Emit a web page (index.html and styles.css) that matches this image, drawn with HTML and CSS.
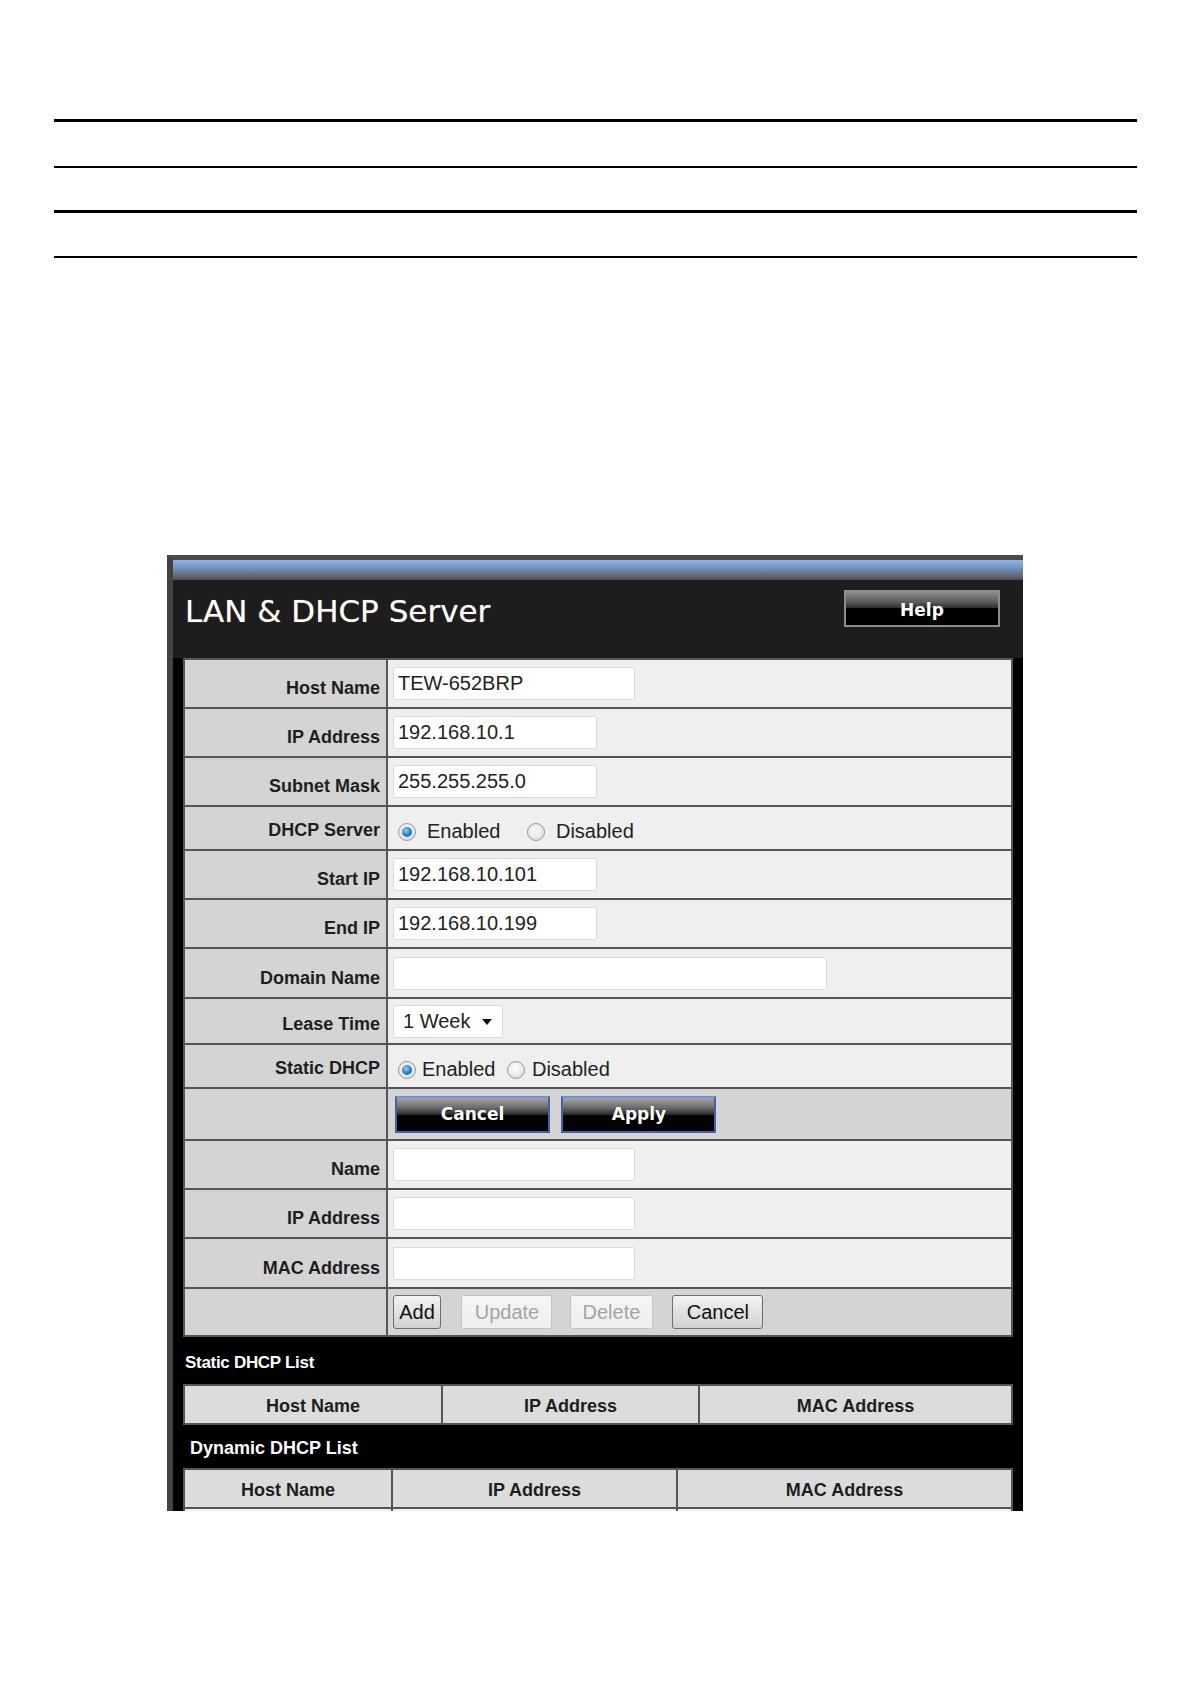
FILE: index.html
```html
<!DOCTYPE html>
<html lang="en">
<head>
    <meta charset="UTF-8">
    <meta name="viewport" content="width=device-width, initial-scale=1.0">
    <title>LAN &amp; DHCP Server</title>
    <link rel="stylesheet" href="styles.css">
</head>
<body>
    <div class="rules">
        <div class="rule thick"></div>
        <div class="rule thin r2"></div>
        <div class="rule thick r3"></div>
        <div class="rule thin r4"></div>
    </div>

    <div class="panel">
        <div class="panel-bar"></div>
        <div class="panel-head">
            <div class="panel-title">LAN &amp; DHCP Server</div>
            <button class="help-btn">Help</button>
        </div>

        <div class="panel-body">
            <table class="form">
                <colgroup>
                    <col class="col-label">
                    <col>
                </colgroup>
                <tr class="h49">
                    <th>Host Name</th>
                    <td><input class="field long" type="text" value="TEW-652BRP"></td>
                </tr>
                <tr class="h49">
                    <th>IP Address</th>
                    <td><input class="field" type="text" value="192.168.10.1"></td>
                </tr>
                <tr class="h49">
                    <th>Subnet Mask</th>
                    <td><input class="field" type="text" value="255.255.255.0"></td>
                </tr>
                <tr class="h44">
                    <th>DHCP Server</th>
                    <td class="radios">
                        <span class="radio on"></span><span class="radio-label">Enabled</span>
                        <span class="radio off wide"></span><span class="radio-label">Disabled</span>
                    </td>
                </tr>
                <tr class="h49">
                    <th>Start IP</th>
                    <td><input class="field" type="text" value="192.168.10.101"></td>
                </tr>
                <tr class="h49">
                    <th>End IP</th>
                    <td><input class="field" type="text" value="192.168.10.199"></td>
                </tr>
                <tr class="h50">
                    <th>Domain Name</th>
                    <td><input class="field domain" type="text" value=""></td>
                </tr>
                <tr class="h46">
                    <th>Lease Time</th>
                    <td>
                        <div class="select">1 Week<span class="caret"></span></div>
                    </td>
                </tr>
                <tr class="h44">
                    <th>Static DHCP</th>
                    <td class="radios tight">
                        <span class="radio on"></span><span class="radio-label">Enabled</span>
                        <span class="radio off"></span><span class="radio-label">Disabled</span>
                    </td>
                </tr>
                <tr class="h52 btn-row">
                    <th></th>
                    <td>
                        <button class="dark-btn">Cancel</button>
                        <button class="dark-btn">Apply</button>
                    </td>
                </tr>
                <tr class="h49">
                    <th>Name</th>
                    <td><input class="field long" type="text" value=""></td>
                </tr>
                <tr class="h49">
                    <th>IP Address</th>
                    <td><input class="field long" type="text" value=""></td>
                </tr>
                <tr class="h50">
                    <th>MAC Address</th>
                    <td><input class="field long" type="text" value=""></td>
                </tr>
                <tr class="h48 btn-row">
                    <th></th>
                    <td>
                        <button class="small-btn add">Add</button>
                        <button class="small-btn update" disabled>Update</button>
                        <button class="small-btn delete" disabled>Delete</button>
                        <button class="small-btn cancel">Cancel</button>
                    </td>
                </tr>
            </table>

            <div class="list-title static">Static DHCP List</div>
            <table class="list static-list">
                <tr>
                    <th>Host Name</th>
                    <th>IP Address</th>
                    <th>MAC Address</th>
                </tr>
            </table>

            <div class="list-title dynamic">Dynamic DHCP List</div>
            <table class="list dynamic-list">
                <tr>
                    <th>Host Name</th>
                    <th>IP Address</th>
                    <th>MAC Address</th>
                </tr>
                <tr class="empty">
                    <td></td>
                    <td></td>
                    <td></td>
                </tr>
            </table>
        </div>
    </div>
</body>
</html>
```

FILE: styles.css
```css
body {
    margin: 0;
    background: #fff;
    font-family: "Liberation Sans", Arial, sans-serif;
}

/* horizontal rules at the top of the page */
.rules {
    padding-top: 119px;
    margin-left: 54px;
    width: 1083px;
}

.rule {
    border-top: 3px solid #000;
}

.rule.thin {
    border-top-width: 2px;
}

.r2 { margin-top: 44px; }
.r3 { margin-top: 42px; }
.r4 { margin-top: 43px; }

/* screenshot panel */
.panel {
    margin: 297px 0 0 167px;
    width: 856px;
    height: 956px;
    box-sizing: border-box;
    overflow: hidden;
    border-top: 5px solid #4a4a4a;
    border-left: 6px solid #434343;
    background: #000;
}

.panel-bar {
    height: 20px;
    background: linear-gradient(180deg, #8cb4ee 0%, #7a9cd0 30%, #656d7a 75%, #4e4e4e 100%);
}

.panel-head {
    height: 78px;
    background: #1d1d1d;
    display: flex;
    justify-content: space-between;
    align-items: flex-start;
    padding: 0 23px 0 12px;
}

.panel-title {
    margin-top: 16px;
    font-family: "DejaVu Sans", Verdana, sans-serif;
    font-size: 31px;
    line-height: 31px;
    color: #fff;
    text-shadow: 0 0 1px rgba(255, 200, 150, 0.6);
}

.help-btn {
    margin-top: 10px;
    width: 156px;
    height: 37px;
    padding: 2px 0 0;
    border: 2px solid #8c8c8c;
    background: linear-gradient(180deg, #8d8d8d 0%, #5c5c5c 30%, #2e2e2e 48%, #000 50%, #000 100%);
    color: #fff;
    font-family: "DejaVu Sans", Verdana, sans-serif;
    font-weight: bold;
    font-size: 17px;
    cursor: pointer;
}

.panel-body {
    padding: 0 10px;
}

/* form table */
.form {
    width: 830px;
    table-layout: fixed;
    border-collapse: collapse;
}

.col-label {
    width: 203px;
}

.form th,
.form td {
    border: 2px solid #555;
    padding: 0;
}

.form th {
    background: #d4d4d4;
    text-align: right;
    vertical-align: bottom;
    padding: 0 6px 8px 0;
    font-size: 18px;
    font-weight: bold;
    color: #1e1e1e;
}

.form td {
    background: #efefef;
    vertical-align: middle;
    padding-left: 5px;
}

.form .btn-row td {
    background: #d4d4d4;
}

.h44 { height: 44px; }
.h46 { height: 46px; }
.h48 { height: 48px; }
.h49 { height: 49px; }
.h50 { height: 50px; }
.h52 { height: 52px; }

.field {
    display: block;
    box-sizing: border-box;
    width: 204px;
    height: 33px;
    margin: 0;
    padding: 0 4px;
    border: 1px solid #dadada;
    border-radius: 2px;
    background: #fff;
    font-family: "Liberation Sans", Arial, sans-serif;
    font-size: 20px;
    color: #222;
    outline: none;
}

.field.long {
    width: 242px;
}

.field.domain {
    width: 434px;
}

.select {
    box-sizing: border-box;
    width: 110px;
    height: 33px;
    padding: 0 0 0 9px;
    border: 1px solid #dadada;
    border-radius: 2px;
    background: #fff;
    font-size: 20px;
    line-height: 31px;
    color: #222;
    position: relative;
}

.caret {
    position: absolute;
    right: 10px;
    top: 13px;
    border-left: 5px solid transparent;
    border-right: 5px solid transparent;
    border-top: 6px solid #111;
}

/* radio buttons */
.form td.radios {
    font-size: 20px;
    color: #222;
    vertical-align: bottom;
    padding-bottom: 6px;
}

.radios > span {
    vertical-align: middle;
}

.radio {
    display: inline-block;
    box-sizing: border-box;
    width: 18px;
    height: 18px;
    margin-left: 5px;
    border-radius: 50%;
    border: 1px solid #9a9a9a;
    background: radial-gradient(circle at 45% 40%, #ffffff 0%, #e6e6e6 60%, #c8c8c8 100%);
    position: relative;
}

.radio.on::after {
    content: "";
    position: absolute;
    left: 3px;
    top: 3px;
    width: 10px;
    height: 10px;
    border-radius: 50%;
    background: radial-gradient(circle at 40% 35%, #8fd0f5 0%, #2a86c4 50%, #0f4f80 100%);
}

.radio-label {
    margin-left: 11px;
}

.radio.wide {
    margin-left: 21px;
}

.tight .radio-label {
    margin-left: 6px;
}

.tight .radio.off {
    margin-left: 6px;
}

.tight .radio.off + .radio-label {
    margin-left: 7px;
}

/* buttons */
.dark-btn {
    width: 155px;
    height: 37px;
    margin-left: 2px;
    margin-right: 5px;
    padding: 0;
    border: 2px solid #3f63a8;
    border-top-color: #6f93d6;
    background: linear-gradient(180deg, #a5a5a5 0%, #6a6a6a 30%, #2b2b2b 50%, #050505 52%, #000 100%);
    color: #fff;
    font-family: "DejaVu Sans", Verdana, sans-serif;
    font-weight: bold;
    font-size: 17px;
    text-shadow: 0 1px 1px #000;
    cursor: pointer;
}

.small-btn {
    height: 34px;
    padding: 0;
    border: 1px solid #6f6f6f;
    border-radius: 3px;
    background: linear-gradient(180deg, #f3f3f3 0%, #e2e2e2 50%, #d3d3d3 100%);
    font-family: "Liberation Sans", Arial, sans-serif;
    font-size: 20px;
    color: #111;
}

.small-btn:disabled {
    border-color: #c4c4c4;
    background: linear-gradient(180deg, #f6f6f6 0%, #eeeeee 100%);
    color: #a4a4a4;
}

.small-btn.add { width: 48px; margin-right: 16px; }
.small-btn.update { width: 91px; margin-right: 13px; }
.small-btn.delete { width: 83px; margin-right: 15px; }
.small-btn.cancel { width: 91px; }

/* list sections */
.list-title {
    box-sizing: border-box;
    color: #fff;
    font-weight: bold;
    line-height: 20px;
}

.list-title.static {
    height: 47px;
    padding: 16px 0 0 2px;
    font-size: 17px;
    letter-spacing: -0.3px;
}

.list-title.dynamic {
    height: 43px;
    padding: 13px 0 0 7px;
    font-size: 18px;
}

.list {
    width: 830px;
    table-layout: fixed;
    border-collapse: collapse;
}

.list th,
.list td {
    border: 2px solid #555;
    background: #dcdcdc;
    height: 39px;
    padding: 4px 0 0;
    box-sizing: border-box;
    font-size: 18px;
    font-weight: bold;
    color: #1e1e1e;
    text-align: center;
}

.list .empty td {
    background: #efefef;
    height: 30px;
}

.static-list th:nth-child(1) { width: 258px; }
.static-list th:nth-child(2) { width: 257px; }

.dynamic-list th:nth-child(1) { width: 208px; }
.dynamic-list th:nth-child(2) { width: 285px; }
```
